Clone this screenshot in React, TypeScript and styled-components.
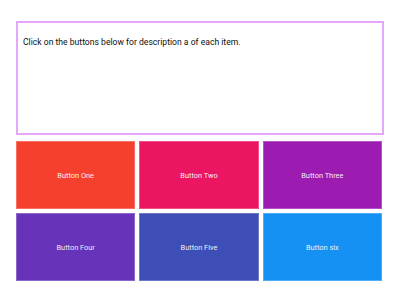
import React from "react";
import styled, { createGlobalStyle } from "styled-components";

const Global = createGlobalStyle`
  html, body { margin: 0; padding: 0; background: #ffffff; }
  body { font-family: Roboto, "Liberation Sans", sans-serif; }
`;

const Page = styled.div`
  width: 400px;
  height: 300px;
  box-sizing: border-box;
  padding: 21px 16px 0 16px;
  display: flex;
  flex-direction: column;
  gap: 6px;
`;

const Description = styled.div`
  box-sizing: border-box;
  height: 114px;
  border: 2px solid #e8a6fb;
  padding: 14px 5px;
  font-size: 8.6px;
  font-weight: 400;
  line-height: 11px;
  color: #0e0e0e;
`;

const Grid = styled.div`
  display: grid;
  grid-template-columns: repeat(3, 1fr);
  grid-auto-rows: 68px;
  gap: 4px;
  margin-right: 2px;
`;

const Tile = styled.button<{ $bg: string }>`
  box-sizing: border-box;
  border: 1px solid rgba(255, 255, 255, 0.25);
  background: ${(p) => p.$bg};
  color: rgba(255, 255, 255, 0.95);
  font-family: Roboto, "Liberation Sans", sans-serif;
  font-size: 7.4px;
  font-weight: 400;
  display: flex;
  align-items: center;
  justify-content: center;
  padding: 0;
  cursor: pointer;
`;

const items = [
  { label: "Button One", bg: "#f6402e" },
  { label: "Button Two", bg: "#ec1562" },
  { label: "Button Three", bg: "#9c1bb0" },
  { label: "Button Four", bg: "#6733b8" },
  { label: "Button Five", bg: "#3d4eb6" },
  { label: "Button six", bg: "#1491f3" },
];

export default function App() {
  return (
    <>
      <Global />
      <Page>
        <Description>Click on the buttons below for description a of each item.</Description>
        <Grid>
          {items.map((it) => (
            <Tile key={it.label} $bg={it.bg}>
              {it.label}
            </Tile>
          ))}
        </Grid>
      </Page>
    </>
  );
}
